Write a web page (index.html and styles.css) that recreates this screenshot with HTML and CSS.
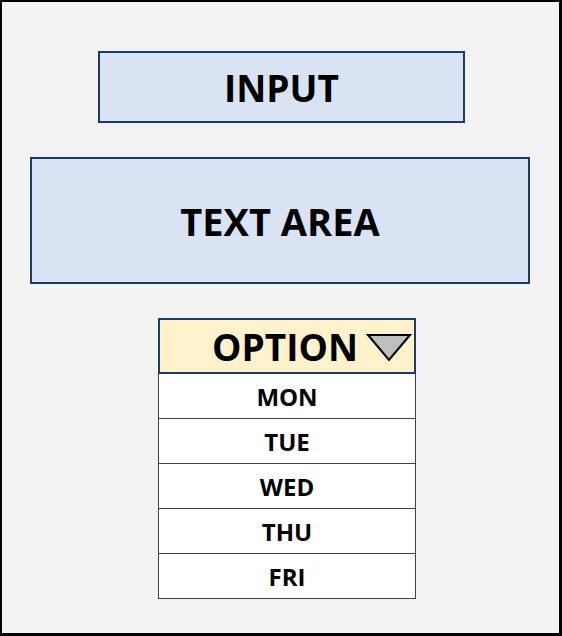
FILE: index.html
```html
<!DOCTYPE html>
<html>
<head>
<meta charset="utf-8">
<link rel="stylesheet" href="styles.css">
</head>
<body>
<div class="frame">
  <div class="input-box">INPUT</div>
  <div class="textarea-box">TEXT AREA</div>
  <div class="select">
    <div class="select-head">
      <span class="select-label">OPTION</span>
      <svg class="caret" width="46" height="29" viewBox="0 0 46 29"><polygon points="2,2 44,2 23,27" fill="#bfbfbf" stroke="#000" stroke-width="2" stroke-linejoin="miter"/></svg>
    </div>
    <div class="option">MON</div>
    <div class="option">TUE</div>
    <div class="option">WED</div>
    <div class="option">THU</div>
    <div class="option">FRI</div>
  </div>
</div>
</body>
</html>
```
FILE: styles.css
```css
html, body {
  margin: 0;
  padding: 0;
}
body {
  width: 562px;
  height: 636px;
  font-family: "Open Sans", "Noto Sans", sans-serif;
  font-weight: bold;
  color: #000;
}
.frame {
  box-sizing: border-box;
  width: 562px;
  height: 636px;
  background: #f2f2f2;
  border-style: solid;
  border-color: #000;
  border-width: 2px 3px 3px 2px;
  padding-top: 49px;
  display: flex;
  flex-direction: column;
  align-items: flex-start;
}
.input-box {
  box-sizing: border-box;
  margin-left: 96px;
  width: 367px;
  height: 72px;
  background: #dae3f3;
  border: 2px solid #1f3864;
  display: flex;
  align-items: center;
  justify-content: center;
  font-size: 37px;
  line-height: 1;
}
.textarea-box {
  box-sizing: border-box;
  margin-left: 28px;
  margin-top: 34px;
  width: 500px;
  height: 127px;
  background: #dae3f3;
  border: 2px solid #1f3864;
  display: flex;
  align-items: center;
  justify-content: center;
  font-size: 38px;
  line-height: 1;
}
.select {
  margin-left: 156px;
  margin-top: 34px;
  width: 258px;
  display: flex;
  flex-direction: column;
}
.select-head {
  box-sizing: border-box;
  height: 56px;
  background: #fff2cc;
  border: 2px solid #1f3864;
  display: flex;
  align-items: center;
  justify-content: flex-end;
  padding-right: 2px;
  gap: 8px;
}
.select-label {
  font-size: 37px;
  line-height: 1;
}
.caret {
  display: block;
  margin-top: 2px;
}
.option {
  box-sizing: border-box;
  height: 45px;
  background: #fff;
  border: 1px solid #404040;
  border-top: none;
  display: flex;
  align-items: center;
  justify-content: center;
  font-size: 24px;
}
```
